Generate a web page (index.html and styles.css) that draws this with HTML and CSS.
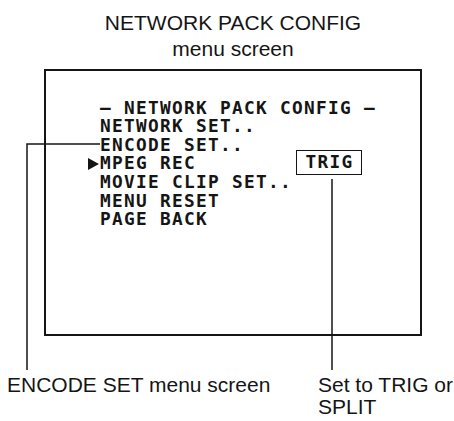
FILE: index.html
```html
<!DOCTYPE html>
<html>
<head>
<meta charset="utf-8">
<link rel="stylesheet" href="styles.css">
</head>
<body>
<div class="page">
  <header class="caption">
    <div>NETWORK PACK CONFIG</div>
    <div>menu screen</div>
  </header>
  <div class="screen">
    <div class="menu">
      <div class="row"><span class="mark"></span><span class="txt">– NETWORK PACK CONFIG –</span></div>
      <div class="row"><span class="mark"></span><span class="txt">NETWORK SET..</span></div>
      <div class="row"><span class="mark"></span><span class="txt">ENCODE SET..</span></div>
      <div class="row"><span class="mark"><span class="arrow"></span></span><span class="txt">MPEG REC</span><span class="badge">TRIG</span></div>
      <div class="row"><span class="mark"></span><span class="txt">MOVIE CLIP SET..</span></div>
      <div class="row"><span class="mark"></span><span class="txt">MENU RESET</span></div>
      <div class="row"><span class="mark"></span><span class="txt">PAGE BACK</span></div>
    </div>
  </div>
  <div class="labels">
    <div class="label-left">ENCODE SET menu screen</div>
    <div class="label-right">Set to TRIG or<br>SPLIT</div>
  </div>
  <svg class="leaders" width="454" height="421" viewBox="0 0 454 421">
    <path d="M27 370 V144 H100" />
    <path d="M332 179 V370" />
  </svg>
</div>
</body>
</html>
```
FILE: styles.css
```css
html, body {
  margin: 0;
  padding: 0;
  background: #fff;
}
.page {
  position: relative;
  width: 454px;
  height: 421px;
  font-family: "Liberation Sans", Arial, sans-serif;
  color: #151515;
  overflow: hidden;
}
.caption {
  padding-top: 10px;
  height: 60px;
  box-sizing: border-box;
  text-align: center;
  font-size: 21px;
  line-height: 26px;
  padding-left: 12px;
}
.screen {
  margin-top: 9px;
  margin-left: 44px;
  width: 378px;
  height: 267px;
  box-sizing: border-box;
  border: 2px solid #151515;
  padding-top: 27.5px;
  padding-left: 42px;
}
.menu {
  font-family: "DejaVu Sans Mono", "Liberation Mono", monospace;
  font-weight: bold;
  font-size: 17.8px;
  letter-spacing: 1.3px;
  line-height: 18.67px;
}
.row {
  display: flex;
  align-items: center;
  height: 18.67px;
}
.txt {
  white-space: pre;
}
.mark {
  width: 12px;
  flex: none;
  display: flex;
  align-items: center;
}
.arrow {
  width: 0;
  height: 0;
  border-left: 11px solid #151515;
  border-top: 6px solid transparent;
  border-bottom: 6px solid transparent;
}
.badge {
  flex: none;
  margin-left: 100px;
  margin-bottom: 2px;
  width: 66px;
  height: 25px;
  box-sizing: border-box;
  border: 1.5px solid #151515;
  display: flex;
  align-items: center;
  justify-content: center;
  padding-left: 1px;
}
.labels {
  display: flex;
  margin-top: 38px;
  font-size: 21px;
  line-height: 22px;
}
.label-left {
  margin-left: 7px;
  width: 311px;
}
.leaders {
  position: absolute;
  left: 0;
  top: 0;
  pointer-events: none;
}
.leaders path {
  fill: none;
  stroke: #151515;
  stroke-width: 1.5;
}
```
